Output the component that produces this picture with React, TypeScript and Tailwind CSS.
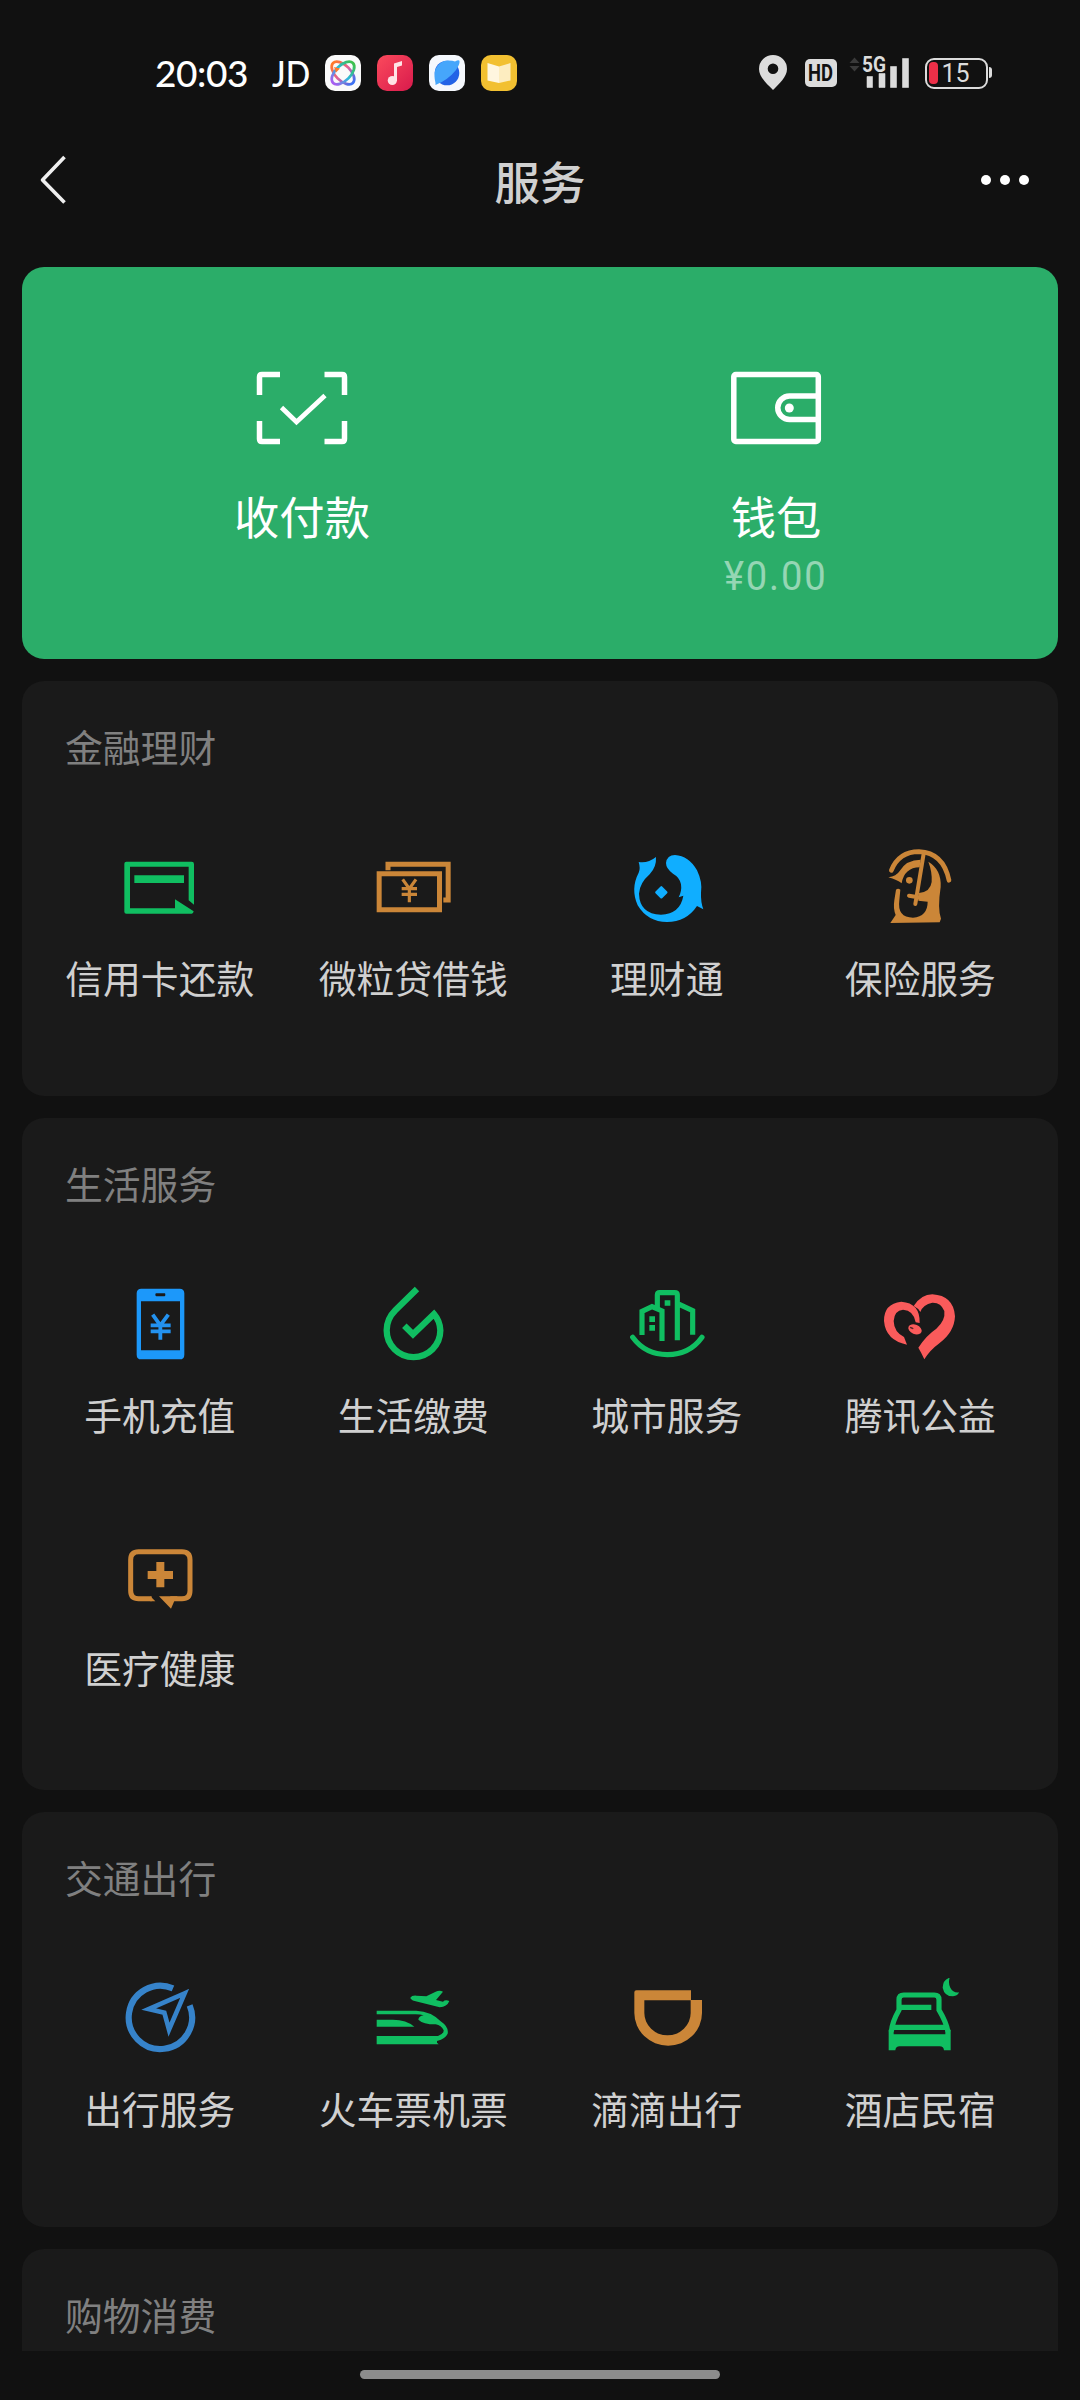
import type { ReactNode } from 'react';

const GREEN = '#10be61';
const ORANGE = '#cb8638';

function CardIcon() {
  return (
    <svg viewBox="239 440 240 240" className="size-20" fill={GREEN}>
      <path d="M258 484H454Q461 484 461 491V613L445 600V499H269V624H404V597L460 633Q459 640 454 640H258Q252 640 252 634V490Q252 484 258 484Z" />
      <path d="M282 525H431V548H282Z" />
    </svg>
  );
}

function BanknotesIcon() {
  return (
    <svg viewBox="1000 440 240 240" className="size-20" fill="none" stroke={ORANGE} strokeWidth="15">
      <path d="M1018.500 520.500H1199.500V628.500H1018.500ZM1045 510V491.500H1225.500V599H1211" />
      <path d="M1089 537L1109 565L1129 537M1109 561V606M1086 565H1132M1086 582H1132" strokeWidth="9.500" />
    </svg>
  );
}

function WealthIcon() {
  return (
    <svg viewBox="200 440 240 240" className="size-20" fill="#10aeff">
      <path d="M235 485Q262 490 287 470Q289 500 268 522Q238 548 236 580Q238 641 302 643Q360 640 369 586L355 591Q365 572 362 552Q359 532 338 520Q317 505 317 488Q320 464 344 464Q385 466 410 510Q427 545 422 578Q421 605 429 627L410 617Q378 665 320 665Q262 665 232 615Q210 565 235 517Q241 505 235 485Z" />
      <path d="M303 561L318 576L303 591L288 576Z" stroke="#10aeff" strokeWidth="7" strokeLinejoin="round" />
    </svg>
  );
}

function InsuranceIcon() {
  return (
    <svg viewBox="961 440 240 240" className="size-20" fill={ORANGE}>
      <path d="M995 510Q1018 454 1078 454Q1151 457 1168 540" fill="none" stroke={ORANGE} strokeWidth="14" strokeLinecap="round" />
      <path d="M986 531Q1010 528 1020 512Q1040 478 1083 478L1080 501Q1034 502 1026 549Q1012 538 986 531Z" />
      <circle cx="1049" cy="540" r="10" />
      <path d="M1106 484Q1146 508 1143 560Q1133 625 1144 655L1140 666L992 668L1008 644Q1000 625 1004 600L1009 568Q1015 562 1022 568L1019 600Q1012 652 1060 652Q1104 648 1104 604L1076 601L1078 578Q1112 575 1116 545Q1118 515 1106 484Z" />
      <path d="M1092 460L1067 611M1048 586L1085 592" fill="none" stroke={ORANGE} strokeWidth="12" strokeLinecap="round" />
    </svg>
  );
}

function PhoneIcon() {
  return (
    <svg viewBox="239 71 240 240" className="size-20" fill="#1c98fa">
      <path fillRule="evenodd" d="M303 85H418Q432 85 432 99V283Q432 297 418 297H303Q289 297 289 283V99Q289 85 303 85ZM302 123V270H419V123ZM348 99Q345 99 345 103T348 108H372Q375 108 375 103T372 99Z" />
      <path d="M337 163L360 195L384 163M360 191V238M331 195H391M331 213H391" fill="none" stroke="#2392f0" strokeWidth="11.500" />
    </svg>
  );
}

function UtilitiesIcon() {
  return (
    <svg viewBox="1000 71 240 240" className="size-20" fill="none" stroke={GREEN} strokeWidth="19">
      <path d="M1132 86L1067 150Q1041 176 1041 210A80.5 80.5 0 0 0 1202 210Q1201 182 1183 161L1120 222L1094 196" />
    </svg>
  );
}

function CityIcon() {
  return (
    <svg viewBox="200 71 240 240" className="size-20" fill="none" stroke={GREEN} strokeWidth="15.5">
      <path d="M245 224V153L275 139L305 152V242M291 148V104Q291 97 298 97H343Q351 97 351 104V240M352 130L397 151V223" />
      <path d="M217 231Q255 283 321 283Q388 283 425 231" strokeLinecap="round" />
      <path d="M267 168h17v17h-17zM267 194h17v17h-17zM313 120h17v16h-17z" fill={GREEN} stroke="none" />
    </svg>
  );
}

function CharityIcon() {
  return (
    <svg viewBox="961 71 240 240" className="size-20" fill="#fa5b5b">
      <path d="M1080 188Q1082 128 1025 124Q972 130 973 182Q978 240 1042 253L1033 230Q1003 215 1002 182Q1004 150 1030 148Q1062 150 1068 186Z" />
      <path d="M1062 137Q1085 102 1118 102Q1182 106 1186 168Q1184 215 1140 248Q1110 270 1094 297Q1084 275 1076 262Q1100 225 1130 205Q1158 180 1154 152Q1144 126 1118 127Q1090 132 1082 155Q1075 143 1062 137Z" />
      <ellipse cx="1066" cy="207" rx="21" ry="14" transform="rotate(22 1066 207)" />
      <ellipse cx="1056" cy="203" rx="6" ry="2.5" fill="#5a2626" transform="rotate(22 1056 203)" />
    </svg>
  );
}

function MedicalIcon() {
  return (
    <svg viewBox="239 50 240 240" className="size-20" fill={ORANGE}>
      <path d="M334 235H295Q271 235 271 211V118Q271 94 295 94H425Q449 94 449 118V211Q449 235 425 235H390" fill="none" stroke={ORANGE} strokeWidth="15" />
      <path d="M330 227.5L345 242.5H330ZM356 227.5H412L402 242L392 265Z" />
      <path d="M348 125h24v27h26v24h-26v25h-24v-25h-26v-24h26z" />
    </svg>
  );
}

function NavigateIcon() {
  return (
    <svg viewBox="239 83 240 240" className="size-20" fill="none" stroke="#3683ca">
      <path d="M398 114A95 95 0 1 0 448 165" strokeWidth="18.500" />
      <path d="M433 129L325 176L372 187L386 238Z" strokeWidth="14" strokeMiterlimit="8" />
    </svg>
  );
}

function TrainPlaneIcon() {
  return (
    <svg viewBox="1000 83 240 240" className="size-20" fill={GREEN}>
      <path d="M1011 181H1130Q1175 183 1203 213Q1228 230 1224 250Q1218 264 1192 272V277L1197 282H1011V257H1195Q1213 250 1212 240Q1205 225 1188 222Q1150 222 1136 208Q1137 197 1152 195Q1140 191 1120 192H1011Z" />
      <path d="M1011 208H1060Q1100 208 1124 229H1011Z" />
      <path d="M1112 142Q1116 135 1130 136L1160 138L1188 124Q1200 119 1210 124L1189 149L1210 154Q1217 147 1229 152Q1222 170 1200 171L1125 152Q1113 148 1112 142Z" />
    </svg>
  );
}

function RideIcon() {
  return (
    <svg viewBox="200 83 240 240" className="size-20" fill={ORANGE}>
      <path d="M228 120H392V149H425V188A101.5 98 0 0 1 222 188V126Q222 120 228 120ZM252 150V188A69.5 67 0 0 0 391 188V150Z" fillRule="evenodd" />
    </svg>
  );
}

function HotelIcon() {
  return (
    <svg viewBox="961 83 240 240" className="size-20" fill={GREEN}>
      <path d="M995 244Q997 216 1018 179V148Q1018 134 1032 134H1124Q1138 134 1138 148V179Q1160 216 1165 244M1018 171H1115M998 231H1162" fill="none" stroke={GREEN} strokeWidth="15.500" />
      <path d="M987 238H1002V252H1157V238H1173V300H1153Q1152 288 1140 288H1020Q1008 288 1007 300H987Z" />
      <path d="M1170 82Q1150 88 1149 112Q1154 138 1180 138Q1195 136 1198 126Q1180 128 1172 112Q1165 98 1170 82Z" />
    </svg>
  );
}

type Service = { label: string; icon: ReactNode };

function Section({ title, items, className }: { title: string; items: Service[]; className: string }) {
  return (
    <section className={`shrink-0 rounded-[22px] bg-[#1a1a1a] px-[11px] pt-10 ${className}`}>
      <h2 className="px-8 text-[37.8px] leading-[50px] text-[#808080]">{title}</h2>
      <div className="mt-[76px] grid grid-cols-4">
        {items.map((item) => (
          <div key={item.label} className="flex h-[253px] flex-col items-center whitespace-nowrap">
            {item.icon}
            <span className="mt-[25px] text-[37.8px] leading-[50px] text-[#d0d0d0]">{item.label}</span>
          </div>
        ))}
      </div>
    </section>
  );
}

function StatusBar() {
  return (
    <div className="flex h-[145px] shrink-0 items-center pl-[155px] text-white">
      <span className="w-[117px] font-['Lato'] text-[37px] font-medium leading-none tracking-[-0.4px]">20:03</span>
      <span className="w-[53px] font-['Lato'] text-[37px] font-medium leading-none">
        <span className="inline-block origin-left scale-x-[.87]">JD</span>
      </span>
      <div className="flex gap-4">
        <svg viewBox="0 0 36 36" className="size-9" fill="none" strokeWidth="2.8">
          <defs>
            <linearGradient id="orbitA" x1="0" y1="0" x2="1" y2="0">
              <stop offset="0" stopColor="#ff7a2a" />
              <stop offset="0.5" stopColor="#e0609a" />
              <stop offset="1" stopColor="#3a72f5" />
            </linearGradient>
            <linearGradient id="orbitB" x1="1" y1="0" x2="0" y2="0">
              <stop offset="0" stopColor="#3fc04c" />
              <stop offset="0.5" stopColor="#2bb8d8" />
              <stop offset="1" stopColor="#a95cf0" />
            </linearGradient>
          </defs>
          <rect width="36" height="36" rx="10" fill="#fafafa" />
          <ellipse cx="18" cy="18" rx="14" ry="7.6" transform="rotate(45 18 18)" stroke="url(#orbitA)" />
          <ellipse cx="18" cy="18" rx="14" ry="7.6" transform="rotate(-45 18 18)" stroke="url(#orbitB)" />
          <path d="M9 12l6 1.5-4 4z" fill="#ff7a2a" />
        </svg>
        <svg viewBox="0 0 36 36" className="size-9">
          <defs>
            <linearGradient id="music" x1="0" y1="0" x2="1" y2="1">
              <stop offset="0" stopColor="#fb4a5c" />
              <stop offset="1" stopColor="#d81a4c" />
            </linearGradient>
          </defs>
          <rect width="36" height="36" rx="10" fill="url(#music)" />
          <circle cx="15.3" cy="25.5" r="4.6" fill="#ffe3e6" />
          <path d="M17 26V8.5L25 6v4.6L20 12v14z" fill="#ffe3e6" />
        </svg>
        <svg viewBox="0 0 36 36" className="size-9">
          <rect width="36" height="36" rx="10" fill="#f5f8fd" />
          <circle cx="18" cy="18" r="12.3" fill="#2363e6" />
          <path d="M6.500 28Q4.500 20 6.500 14Q11 5.500 19 5.500Q24 5.700 26 6.500Q30 4.500 30.500 6Q31 9 27 15Q19 25 6.500 30Z" fill="#46a6fb" />
        </svg>
        <svg viewBox="0 0 36 36" className="size-9">
          <rect width="36" height="36" rx="10" fill="#f2c031" />
          <path d="M6.500 8L18 11.500V28L6.500 25.500Z" fill="#fff6df" />
          <path d="M29.500 8L18 11.500V28L29.500 25.500Z" fill="#fdedc0" />
        </svg>
      </div>
      <svg viewBox="0 0 28 35" className="ml-[242px] h-[35px] w-7" fill="#dcdcdc">
        <path fillRule="evenodd" d="M14 0A14 14 0 0 1 28 14C28 22 20 29 14 35C8 29 0 22 0 14A14 14 0 0 1 14 0ZM14 8.500a5.300 5.300 0 1 0 0 10.600a5.300 5.300 0 1 0 0-10.600Z" />
      </svg>
      <span className="ml-[18px] mt-px flex h-7 w-8 items-center justify-center rounded-[5px] bg-[#dcdcdc] font-['Roboto'] text-[23px] font-bold leading-none text-[#111]">
        <span className="inline-block scale-x-[.8]">HD</span>
      </span>
      <svg viewBox="0 -8 62 50" className="ml-3 h-[50px] w-[62px]" fill="#dcdcdc">
        <path d="M0.500 7L5.500 1.500L10.500 7ZM0.500 10L5.500 15.500L10.500 10Z" fill="#3a3a3a" />
        <text x="13" y="15.500" fontFamily="Roboto" fontWeight="700" fontSize="21.500" textLength="24" lengthAdjust="spacingAndGlyphs">5G</text>
        <path d="M18 20.500h5.500v11H18zM30 17.500h6v14h-6zM41.500 10.500h6v21h-6zM53.500 2.500h6v29h-6z" stroke="#dcdcdc" strokeWidth=".6" strokeLinejoin="round" />
      </svg>
      <div className="ml-[13.5px] mt-px flex h-[31px] w-[63px] items-center rounded-[9px] border-[2.5px] border-[#dcdcdc] pl-0.5">
        <span className="h-[22px] w-[9px] rounded-[4px] bg-[#ec2f48]" />
        <span className="ml-1 font-['Roboto'] text-[25px] leading-none text-[#dcdcdc]">15</span>
      </div>
      <span className="ml-[1.5px] h-[11px] w-[2.5px] rounded-r bg-[#dcdcdc]" />
    </div>
  );
}

function Header() {
  return (
    <header className="flex h-[122px] shrink-0 items-start justify-between pl-[38px] pr-[51px] pt-[5px]">
      <svg viewBox="0 0 30 60" className="h-[60px] w-[30px]" fill="none" stroke="#efefef" strokeWidth="3.600">
        <path d="M26.500 7L4.500 30L26.500 52.500" strokeLinejoin="round" />
      </svg>
      <h1 className="ml-[31px] text-[45.500px] font-medium leading-[60px] text-[#d0d0d0]">服务</h1>
      <div className="flex h-[60px] items-center gap-[9px]">
        <i className="size-2.5 rounded-full bg-white" />
        <i className="size-2.5 rounded-full bg-white" />
        <i className="size-2.5 rounded-full bg-white" />
      </div>
    </header>
  );
}

function PayCard() {
  return (
    <section className="grid h-[392px] shrink-0 grid-cols-2 rounded-[22px] bg-[#2bad69] pl-[43px] pr-[45px] pt-[101px] text-white">
      <div className="flex flex-col items-center">
        <svg viewBox="252 368 100 80" className="h-20 w-[100px]" fill="none" stroke="white" strokeWidth="5.500">
          <path d="M259.500 395V377Q259.500 374.500 262 374.500H280M324.500 374.500H342Q344.500 374.500 344.500 377V395M344.500 421V439Q344.500 441.500 342 441.500H324.500M280 441.500H262Q259.500 441.500 259.500 439V421" />
          <path d="M281.500 407.500L296.500 422L325 395.500" strokeWidth="4.800" />
        </svg>
        <span className="mt-[37px] text-[45.300px] leading-[60px]">收付款</span>
      </div>
      <div className="flex flex-col items-center">
        <svg viewBox="727 368 100 80" className="h-20 w-[100px]" fill="none" stroke="white" strokeWidth="5.500">
          <rect x="734.800" y="374.500" width="84.500" height="67" rx="2" />
          <path d="M819 396H790.500A11.750 11.750 0 0 0 790.500 419.500H819" />
          <circle cx="790.300" cy="408" r="4.500" fill="white" stroke="none" />
        </svg>
        <span className="mt-[37px] text-[45.300px] leading-[60px]">钱包</span>
        <span className="mt-[6px] inline-block scale-x-[.93] font-['Roboto'] text-[41px] leading-[50px] tracking-[2px] text-white/50">¥0.00</span>
      </div>
    </section>
  );
}

const finance: Service[] = [
  { label: '信用卡还款', icon: <CardIcon /> },
  { label: '微粒贷借钱', icon: <BanknotesIcon /> },
  { label: '理财通', icon: <WealthIcon /> },
  { label: '保险服务', icon: <InsuranceIcon /> },
];

const living: Service[] = [
  { label: '手机充值', icon: <PhoneIcon /> },
  { label: '生活缴费', icon: <UtilitiesIcon /> },
  { label: '城市服务', icon: <CityIcon /> },
  { label: '腾讯公益', icon: <CharityIcon /> },
  { label: '医疗健康', icon: <MedicalIcon /> },
];

const travel: Service[] = [
  { label: '出行服务', icon: <NavigateIcon /> },
  { label: '火车票机票', icon: <TrainPlaneIcon /> },
  { label: '滴滴出行', icon: <RideIcon /> },
  { label: '酒店民宿', icon: <HotelIcon /> },
];

export default function App() {
  return (
    <div className="flex h-[2400px] w-[1080px] flex-col overflow-hidden bg-[#111111] font-['Noto_Sans_CJK_SC',sans-serif]">
      <StatusBar />
      <Header />
      <main className="flex min-h-0 flex-1 flex-col gap-[22px] overflow-hidden px-[22px]">
        <PayCard />
        <Section title="金融理财" items={finance} className="h-[415px]" />
        <Section title="生活服务" items={living} className="h-[672px]" />
        <Section title="交通出行" items={travel} className="h-[415px]" />
        <Section title="购物消费" items={[]} className="h-[415px]" />
      </main>
      <footer className="flex h-[49px] shrink-0 justify-center pt-[19px]">
        <div className="h-[9px] w-[360px] rounded-full bg-[#8c8c8c]" />
      </footer>
    </div>
  );
}
